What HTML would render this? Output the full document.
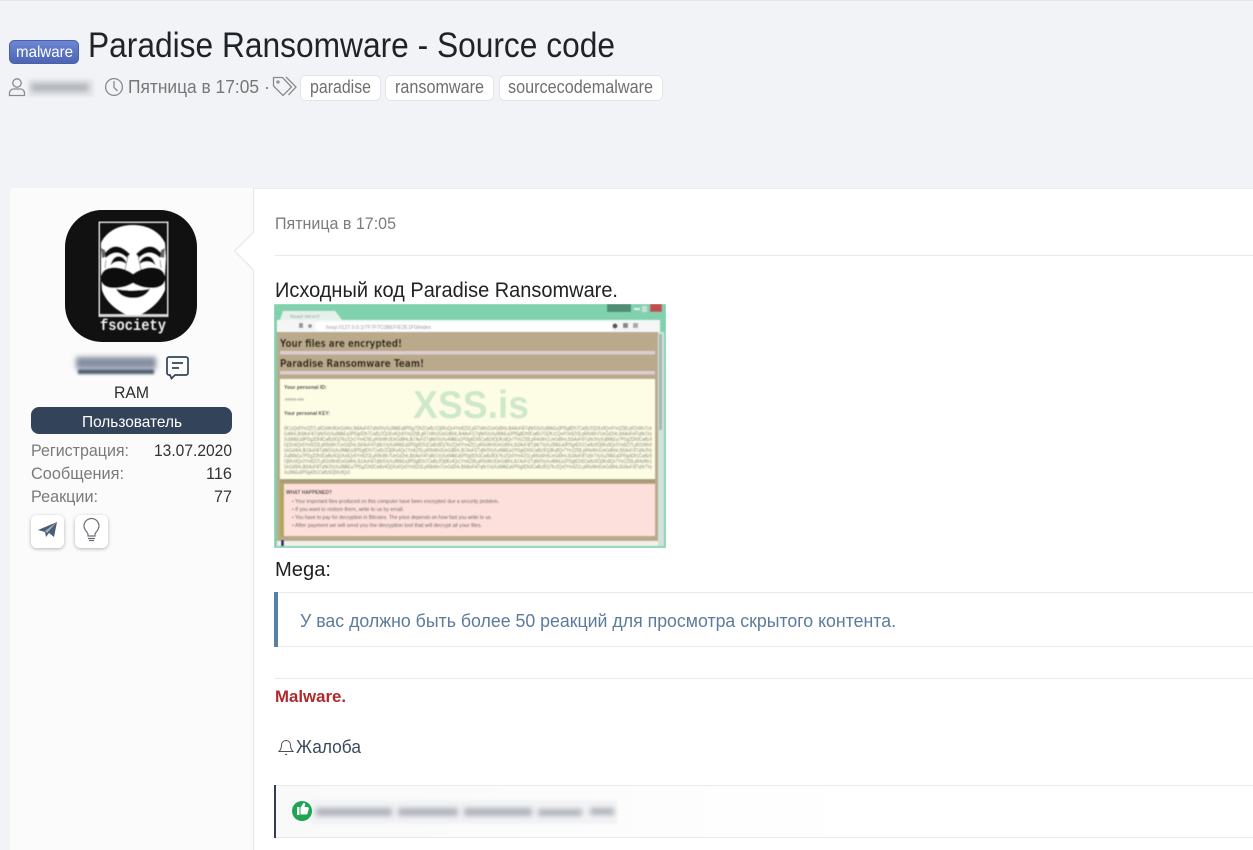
<!DOCTYPE html>
<html lang="ru"><head><meta charset="utf-8"><title>Paradise Ransomware - Source code</title>
<style>
html,body{margin:0;padding:0;width:1253px;height:850px;overflow:hidden;background:#f1f3f6}
svg{display:block}
text{font-family:"Liberation Sans","Noto Sans CJK SC",sans-serif}
</style></head><body>
<svg width="1253" height="850" viewBox="0 0 1253 850" xmlns="http://www.w3.org/2000/svg">
<defs>
<filter id="b3" x="-20%" y="-100%" width="140%" height="300%"><feGaussianBlur stdDeviation="3.200"/></filter>
<filter id="b2" x="-20%" y="-100%" width="140%" height="300%"><feGaussianBlur stdDeviation="2.600"/></filter>
<filter id="b1" x="-10%" y="-50%" width="120%" height="200%"><feGaussianBlur stdDeviation="1.200"/></filter>
<filter id="s" x="-30%" y="-30%" width="160%" height="160%"><feDropShadow dx="0" dy="1" stdDeviation="1.800" flood-color="#000" flood-opacity=".3"/></filter>
<filter id="im" x="0" y="0" width="100%" height="100%"><feGaussianBlur stdDeviation=".5"/></filter>
<filter id="av" x="0" y="0" width="100%" height="100%"><feGaussianBlur stdDeviation=".4"/></filter>
<linearGradient id="bd" x1="0" y1="0" x2="0" y2="1"><stop offset="0" stop-color="#6d88d4"/><stop offset="1" stop-color="#4c64b2"/></linearGradient>
<linearGradient id="rb" x1="0" y1="0" x2="1" y2="0"><stop offset="0" stop-color="#f9f9f9"/><stop offset=".6" stop-color="#fff"/></linearGradient>
<clipPath id="imc"><rect x="274" y="304" width="392" height="244"/></clipPath>
</defs>
<rect width="1253" height="850" fill="#f1f3f6"/>
<rect width="1253" height="1" fill="#e3e5e8"/>

<!-- header -->
<rect x="9.5" y="40.5" width="69" height="23" rx="5" fill="url(#bd)" stroke="#4a5fa6"/>
<text x="16" y="57" font-size="16" fill="#fff" textLength="57" lengthAdjust="spacingAndGlyphs">malware</text>
<text x="88" y="57" font-size="35" fill="#1f2328" textLength="527" lengthAdjust="spacingAndGlyphs">Paradise Ransomware - Source code</text>

<g fill="none" stroke="#8a8a8a" stroke-width="1.3">
<circle cx="17" cy="83" r="4.2"/>
<path d="M9.5 95.5v-2.5a4 4 0 0 1 4-4h7a4 4 0 0 1 4 4v2.5z"/>
<circle cx="114" cy="87" r="8.4"/>
<path d="M114 81v6.5l3.5 3.5"/>
<path d="M273.500 77.500h9l9 9.500-8.500 8.500-9.500-9.500z"/>
<path d="M286 77l10 10-7.500 8"/>
<circle cx="278" cy="82" r="1"/>
</g>
<rect x="28" y="79" width="66" height="18" fill="#e6e8eb" filter="url(#b1)"/>
<rect x="31" y="83" width="58" height="9" fill="#b4b7bd" filter="url(#b2)"/>
<text x="128" y="93" font-size="18" fill="#777" textLength="131" lengthAdjust="spacingAndGlyphs">Пятница в 17:05</text>
<text x="264" y="93" font-size="18" fill="#777">·</text>

<g fill="#fff" stroke="#e4e5e8">
<rect x="300.500" y="75.500" width="80" height="25" rx="5"/>
<rect x="385.500" y="75.500" width="108" height="25" rx="5"/>
<rect x="499.500" y="75.500" width="163" height="25" rx="5"/>
</g>
<g font-size="18" fill="#6f6f6f">
<text x="310" y="93" textLength="61" lengthAdjust="spacingAndGlyphs">paradise</text>
<text x="395" y="93" textLength="89" lengthAdjust="spacingAndGlyphs">ransomware</text>
<text x="508" y="93" textLength="145" lengthAdjust="spacingAndGlyphs">sourcecodemalware</text>
</g>

<!-- card -->
<path d="M10 850V192a4 4 0 0 1 4-4H1253V850z" fill="#fff"/>
<path d="M10 850V192a4 4 0 0 1 4-4H253V232L234 251L253 270V850z" fill="#fbfbfb"/>
<path d="M253.500 188V232L234.500 251L253.500 270V850" fill="none" stroke="#e4e5e8"/>
<path d="M253.500 188.500H1253" stroke="#e9eaec"/>

<!-- avatar -->
<rect x="65" y="210" width="132" height="132" rx="37" fill="#111"/>
<g filter="url(#av)">
<rect x="98.500" y="221.500" width="70" height="94" fill="none" stroke="#d8d8d8" stroke-width="3"/>
<path d="M101 243C106 232 118 225 133 225C148 225 160 232 165 243L166 258L165 275V290C160 302 150 310 140 315H127C116 310 106 302 102 290L101 275z" fill="#fff"/>
<path d="M101 248l4 2 1 7-4 1zM165 248l-4 2-1 7 4 1z" fill="#666"/>
<path d="M105 253C112 244 120 244 130 254L127 258C120 251 113 251 106 258zM161 253C154 244 146 244 136 254L139 258C146 251 153 251 160 258z" fill="#111"/>
<path d="M112 263C115 255 122 255 126 263C122 260 116 260 112 263zM154 263C151 255 144 255 140 263C144 260 150 260 154 263z" fill="#111" stroke="#111" stroke-width="1.500"/>
<path d="M128 256l-3 14M138 256l3 14M106 260l-1 8M160 260l1 8" stroke="#999" stroke-width="1" fill="none"/>
<path d="M133 274C128 270 118 266 110 268C103 269 100 275 101 280C102 286 108 288 114 288C122 288 128 286 133 283C138 286 144 288 152 288C158 288 164 286 165 280C166 275 163 269 156 268C148 266 138 270 133 274z" fill="#111"/>
<path d="M116 289Q133 292 150 289Q145 298 133 298Q121 298 116 289z" fill="#111"/>
<text x="100" y="330" font-size="15.500" font-weight="700" style="font-family:'Liberation Mono',monospace" fill="#eee" textLength="66" lengthAdjust="spacingAndGlyphs">fsociety</text>
</g>

<!-- name -->
<rect x="78" y="369" width="76" height="5" fill="#33435a" filter="url(#b1)" opacity=".9"/>
<rect x="76" y="357" width="80" height="12" fill="#828d9f" filter="url(#b2)"/>
<path d="M169 357h17a2 2 0 0 1 2 2v14a2 2 0 0 1-2 2h-11l-3.500 3.500-1.500-3.500h-1a2 2 0 0 1-2-2v-14a2 2 0 0 1 2-2z" fill="none" stroke="#33435a" stroke-width="1.700"/>
<path d="M172 363h11M172 368h7" stroke="#33435a" stroke-width="1.700"/>
<text x="114" y="398" font-size="17" fill="#2b2b2b" textLength="35" lengthAdjust="spacingAndGlyphs">RAM</text>
<rect x="31" y="407" width="201" height="27" rx="8" fill="#33435a"/>
<text x="82" y="427" font-size="16" fill="#fff" textLength="100" lengthAdjust="spacingAndGlyphs">Пользователь</text>
<g font-size="17" fill="#7a7a7a">
<text x="31" y="456" textLength="98" lengthAdjust="spacingAndGlyphs">Регистрация:</text>
<text x="31" y="479" textLength="93" lengthAdjust="spacingAndGlyphs">Сообщения:</text>
<text x="31" y="502" textLength="67" lengthAdjust="spacingAndGlyphs">Реакции:</text>
</g>
<g font-size="17" fill="#333" text-anchor="end">
<text x="232" y="456" textLength="78" lengthAdjust="spacingAndGlyphs">13.07.2020</text>
<text x="232" y="479" textLength="26" lengthAdjust="spacingAndGlyphs">116</text>
<text x="232" y="502" textLength="18" lengthAdjust="spacingAndGlyphs">77</text>
</g>
<rect x="31" y="515" width="33" height="33" rx="6" fill="#fff" filter="url(#s)"/>
<rect x="75" y="515" width="33" height="33" rx="6" fill="#fff" filter="url(#s)"/>
<path d="M38 530L57 522L54 537L49 533L46 537L45 532z" fill="#4a5d78"/>
<path d="M45 531L57 522L47 533z" fill="#fff" opacity=".5"/>
<g fill="none" stroke="#6a6f76" stroke-width="1.200">
<path d="M88 536v-1.500c0-2.500-4-4-4-8.500a7.500 7.500 0 0 1 15 0c0 4.500-4 6-4 8.500v1.500z"/>
<path d="M88 538.500h7M89 540.500h5"/>
</g>

<!-- post -->
<text x="275" y="229" font-size="17" fill="#7b7b7b" textLength="121" lengthAdjust="spacingAndGlyphs">Пятница в 17:05</text>
<rect x="275" y="255" width="978" height="1" fill="#e9eaec"/>
<text x="275" y="297" font-size="21" fill="#222" textLength="343" lengthAdjust="spacingAndGlyphs">Исходный код Paradise Ransomware.</text>

<!-- screenshot image -->
<g clip-path="url(#imc)"><g filter="url(#im)">
<rect x="274" y="304" width="392" height="244" fill="#80d2ae"/>
<path d="M280 320l3-9h52l7 9z" fill="#e6f1ec"/>
<text x="290" y="318" font-size="4.500" fill="#999" textLength="30" lengthAdjust="spacingAndGlyphs">Read WHAT</text>
<rect x="607" y="304" width="24" height="8" fill="#4f8d74"/>
<rect x="634" y="308" width="6" height="2" fill="#e0f0ea"/>
<rect x="642" y="306" width="5" height="6" fill="#c9dfd7"/>
<rect x="650" y="304" width="12" height="8" fill="#c0504d"/>
<rect x="277" y="320" width="383" height="12" fill="#f3f6f4"/>
<rect x="316" y="322" width="296" height="9" fill="#fff"/>
<text x="326" y="329" font-size="5" fill="#888" textLength="105" lengthAdjust="spacingAndGlyphs">hxxp://127.0.0.1/7F7F7C0BEF/E2E1F0/index</text>
<rect x="299" y="323" width="4" height="5" fill="#999"/><circle cx="310" cy="326" r="2" fill="#999"/>
<circle cx="615" cy="326" r="2.500" fill="#555"/><rect x="623" y="323" width="5" height="5" fill="#888"/><rect x="633" y="323" width="5" height="5" fill="#aaa"/>
<rect x="277" y="332" width="381" height="214" fill="#bba98b"/>
<text x="280" y="347" font-size="10.500" font-weight="700" style="font-family:'DejaVu Sans',sans-serif" fill="#1c1c10" textLength="122" lengthAdjust="spacingAndGlyphs">Your files are encrypted!</text>
<rect x="280" y="351" width="375" height="3.500" fill="#dccdd0"/>
<text x="280" y="367" font-size="10.500" font-weight="700" style="font-family:'DejaVu Sans',sans-serif" fill="#1c1c10" textLength="144" lengthAdjust="spacingAndGlyphs">Paradise Ransomware Team!</text>
<rect x="280" y="371" width="375" height="3.500" fill="#dccdd0"/>
<rect x="280" y="379" width="375" height="100" fill="#fdfde6"/>
<text x="284" y="389" font-size="5.500" font-weight="700" fill="#222" textLength="43" lengthAdjust="spacingAndGlyphs">Your personal ID:</text>
<text x="285" y="401" font-size="4.500" fill="#777" textLength="19" lengthAdjust="spacingAndGlyphs">#####-###</text>
<text x="284" y="415" font-size="5.500" font-weight="700" fill="#222" textLength="46" lengthAdjust="spacingAndGlyphs">Your personal KEY:</text>
<g font-size="5.500" fill="#77776c" style="font-family:'Liberation Mono',monospace">
<text x="284" y="430" textLength="368" lengthAdjust="spacingAndGlyphs">0K1xQv8Ym3Zt7LpR2sWn9UeGd4HcJb6AoFi5TqNr0VyXu3MkEa8PlSg7Dh2CwBz1Oj9KxQv4Ym8Zt3LpR7sWn2UeGd9HcJb4AoFi6TqNr5VyXu0MkEa3PlSg8Dh7CwBz2Oj1Kx9Qv4Ym3Zt8LpR2sWn7Ue</text>
<text x="284" y="435.500" textLength="368" lengthAdjust="spacingAndGlyphs">Gd4HcJb9AoFi6TqNr5VyXu8MkEa3PlSg0Dh7CwBz2Oj1Kx4Qv9Ym3Zt8LpR7sWn2UeGd6HcJb4AoFi1TqNr5VyXu9MkEa3PlSg8Dh0CwBz7Oj2Kx1Qv4Ym9Zt3LpR8sWn7UeGd2HcJb6AoFi4TqNr1Vy</text>
<text x="284" y="441" textLength="368" lengthAdjust="spacingAndGlyphs">Xu5MkEa9PlSg3Dh8CwBz0Oj7Kx2Qv1Ym4Zt6LpR9sWn3UeGd8HcJb7AoFi2TqNr0VyXu4MkEa1PlSg6Dh5CwBz9Oj3Kx8Qv7Ym2Zt0LpR4sWn1UeGd6HcJb5AoFi9TqNr3VyXu8MkEa7PlSg2Dh0CwBz4</text>
<text x="284" y="446.500" textLength="368" lengthAdjust="spacingAndGlyphs">Oj1Kx6Qv5Ym9Zt3LpR8sWn7UeGd2HcJb0AoFi4TqNr1VyXu6MkEa5PlSg9Dh3CwBz8Oj7Kx2Qv0Ym4Zt1LpR6sWn5UeGd9HcJb3AoFi8TqNr7VyXu2MkEa0PlSg4Dh1CwBz6Oj5Kx9Qv3Ym8Zt7LpR2sWn0</text>
<text x="284" y="452" textLength="368" lengthAdjust="spacingAndGlyphs">UeGd4HcJb1AoFi6TqNr5VyXu9MkEa3PlSg8Dh7CwBz2Oj0Kx4Qv1Ym6Zt5LpR9sWn3UeGd8HcJb7AoFi2TqNr0VyXu4MkEa1PlSg6Dh5CwBz9Oj3Kx8Qv7Ym2Zt0LpR4sWn1UeGd6HcJb5AoFi9TqNr3Vy</text>
<text x="284" y="457.500" textLength="368" lengthAdjust="spacingAndGlyphs">Xu8MkEa7PlSg2Dh0CwBz4Oj1Kx6Qv5Ym9Zt3LpR8sWn7UeGd2HcJb0AoFi4TqNr1VyXu6MkEa5PlSg9Dh3CwBz8Oj7Kx2Qv0Ym4Zt1LpR6sWn5UeGd9HcJb3AoFi8TqNr7VyXu2MkEa0PlSg4Dh1CwBz6</text>
<text x="284" y="463" textLength="368" lengthAdjust="spacingAndGlyphs">Oj5Kx9Qv3Ym8Zt7LpR2sWn0UeGd4HcJb1AoFi6TqNr5VyXu9MkEa3PlSg8Dh7CwBz2Oj0Kx4Qv1Ym6Zt5LpR9sWn3UeGd8HcJb7AoFi2TqNr0VyXu4MkEa1PlSg6Dh5CwBz9Oj3Kx8Qv7Ym2Zt0LpR4sWn1</text>
<text x="284" y="468.500" textLength="368" lengthAdjust="spacingAndGlyphs">UeGd6HcJb5AoFi9TqNr3VyXu8MkEa7PlSg2Dh0CwBz4Oj1Kx6Qv5Ym9Zt3LpR8sWn7UeGd2HcJb0AoFi4TqNr1VyXu6MkEa5PlSg9Dh3CwBz8Oj7Kx2Qv0Ym4Zt1LpR6sWn5UeGd9HcJb3AoFi8TqNr7Vy</text>
<text x="284" y="474" textLength="66" lengthAdjust="spacingAndGlyphs">Xu2MkEa0PlSg4Dh1CwBz6Oj5Kx9Qv3</text>
</g>
<rect x="280" y="479" width="375" height="4" fill="#a99c78"/>
<rect x="280" y="483" width="4" height="54" fill="#b0a95a"/>
<rect x="284" y="484" width="371" height="52" fill="#fde0dc"/>
<text x="286" y="494" font-size="5" font-weight="700" fill="#333" textLength="46" lengthAdjust="spacingAndGlyphs">WHAT HAPPENED?</text>
<g font-size="5.200" fill="#555">
<text x="292" y="503" textLength="207" lengthAdjust="spacingAndGlyphs">•  Your important files produced on this computer have been encrypted due a security problem.</text>
<text x="292" y="511" textLength="112" lengthAdjust="spacingAndGlyphs">•  If you want to restore them, write to us by email.</text>
<text x="292" y="519" textLength="200" lengthAdjust="spacingAndGlyphs">•  You have to pay for decryption in Bitcoins. The price depends on how fast you write to us.</text>
<text x="292" y="527" textLength="190" lengthAdjust="spacingAndGlyphs">•  After payment we will send you the decryption tool that will decrypt all your files.</text>
</g>
<rect x="277" y="541" width="381" height="5" fill="#f1f1ea"/>
<rect x="281" y="540" width="3" height="6" fill="#1c2a70"/>
<rect x="658" y="332" width="6" height="214" fill="#cfe3da"/>
<rect x="659" y="334" width="3" height="96" fill="#a9b5ad"/>
<text x="413" y="418" font-size="39" font-weight="700" fill="#cfe8c9" textLength="116" lengthAdjust="spacingAndGlyphs">XSS.is</text>
</g></g>

<text x="275" y="576" font-size="20" fill="#222" textLength="56" lengthAdjust="spacingAndGlyphs">Mega:</text>

<rect x="275" y="592" width="978" height="55" fill="#fff"/>
<path d="M275 592.500H1253M275 646.500H1253" stroke="#e9eaec"/>
<rect x="274" y="592" width="4" height="55" fill="#5a7fa6"/>
<text x="300" y="627" font-size="18.500" fill="#5c7b9c" textLength="596" lengthAdjust="spacingAndGlyphs">У вас должно быть более 50 реакций для просмотра скрытого контента.</text>

<rect x="275" y="678" width="978" height="1" fill="#e9eaec"/>
<text x="275" y="702" font-size="17" font-weight="700" fill="#b02a2d" textLength="71" lengthAdjust="spacingAndGlyphs">Malware.</text>

<g fill="none" stroke="#4a4f58" stroke-width="1">
<path d="M279 751.500c2-2 2.500-4 2.500-6.500a4.500 4.500 0 0 1 9 0c0 2.500.5 4.500 2.500 6.500z"/>
<path d="M285 754q1 1.500 2 0"/>
</g>
<text x="296" y="753" font-size="18" fill="#3a4a5e" textLength="65" lengthAdjust="spacingAndGlyphs">Жалоба</text>

<!-- reactions -->
<rect x="275" y="785" width="978" height="53" fill="url(#rb)"/>
<path d="M275 785.500H1253M275 837.500H1253" stroke="#e9eaec"/>
<rect x="274" y="785" width="2" height="53" fill="#2f3e56"/>
<rect x="311" y="800" width="306" height="24" fill="#f2f3f5" filter="url(#b1)"/>
<g fill="#aeb2b9" filter="url(#b2)">
<rect x="316" y="808" width="76" height="8"/>
<rect x="398" y="808" width="60" height="8"/>
<rect x="464" y="808" width="68" height="8"/>
<rect x="538" y="809" width="44" height="7"/>
<rect x="590" y="808" width="24" height="7"/>
</g>
<circle cx="302" cy="811" r="10" fill="#1ea453"/>
<path d="M297 807h2.500v8h-2.500zM300.500 807.500l3-4.500c1.500 0 2 1 1.500 2.500l-.5 1.500h3c1 0 1.500 1 1.200 2l-1.200 4.500c-.2.700-.7 1-1.500 1h-5.500z" fill="#fff"/>
</svg>
</body></html>
